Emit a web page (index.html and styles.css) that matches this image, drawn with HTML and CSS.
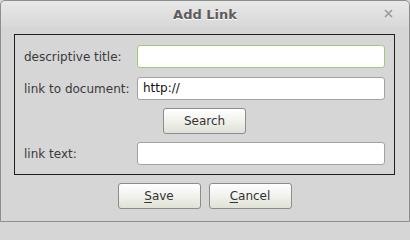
FILE: index.html
```html
<!DOCTYPE html>
<html>
<head>
<meta charset="utf-8">
<link rel="stylesheet" href="styles.css">
</head>
<body>
<div class="window">
  <div class="titlebar">
    <span class="title">Add Link</span>
    <span class="close">
      <svg width="9" height="9" viewBox="0 0 9 9"><path d="M1 1 L8 8 M8 1 L1 8" stroke="#9a9a9a" stroke-width="1.6" fill="none"/></svg>
    </span>
  </div>
  <div class="content">
    <div class="frame">
      <div class="row">
        <label class="label">descriptive title:</label>
        <div class="input focused"></div>
      </div>
      <div class="row">
        <label class="label">link to document:</label>
        <div class="input">http://</div>
      </div>
      <div class="row center">
        <button class="btn search">Search</button>
      </div>
      <div class="row">
        <label class="label">link text:</label>
        <div class="input"></div>
      </div>
    </div>
    <div class="actions">
      <button class="btn"><u>S</u>ave</button>
      <button class="btn"><u>C</u>ancel</button>
    </div>
  </div>
</div>
</body>
</html>
```
FILE: styles.css
```css
html, body {
  margin: 0;
  padding: 0;
  background: #d6d6d6;
}
.window {
  width: 410px;
  height: 222px;
  box-sizing: border-box;
  border: 1px solid #8e8e8e;
  border-radius: 5px 5px 0 0;
  background: #d6d6d6;
  font-family: "DejaVu Sans", sans-serif;
  color: #3a3a3a;
  overflow: hidden;
}
.titlebar {
  position: relative;
  height: 26px;
  display: flex;
  align-items: center;
  justify-content: center;
  background: linear-gradient(#e8e8e8, #d8d8d8);
  border-radius: 4px 4px 0 0;
}
.title {
  font-weight: bold;
  font-size: 13px;
  color: #5c5c5c;
  text-shadow: 0 1px 0 #ffffff;
}
.close {
  position: absolute;
  right: 16px;
  top: 8px;
  display: flex;
}
.content {
  padding: 7px 15px 0 13px;
  display: flex;
  flex-direction: column;
}
.frame {
  width: 381px;
  box-sizing: border-box;
  border: 1px solid #1e1e1e;
  padding: 10px 9px 9px 9px;
  display: flex;
  flex-direction: column;
  gap: 9px;
}
.row {
  display: flex;
  align-items: center;
}
.row.center {
  justify-content: center;
  margin: -1px 0;
}
.label {
  font-size: 12px;
  width: 113px;
  flex: none;
}
.input {
  width: 248px;
  height: 23px;
  box-sizing: border-box;
  background: #ffffff;
  border: 1px solid #a2a2a2;
  border-radius: 3px;
  font-size: 12px;
  color: #111;
  padding-left: 5px;
  line-height: 21px;
}
.input.focused {
  border-color: #9fc97c;
}
.btn {
  width: 83px;
  height: 26px;
  box-sizing: border-box;
  border: 1px solid #8c8c8c;
  border-radius: 3px;
  background: linear-gradient(#ffffff, #f4f5f1 40%, #dfe2d6);
  font-family: "DejaVu Sans", sans-serif;
  font-size: 12px;
  color: #333;
  padding: 0;
}
.btn u {
  text-decoration-thickness: 1px;
  text-underline-offset: 2px;
}
.actions {
  display: flex;
  justify-content: center;
  gap: 8px;
  margin-top: 8px;
  margin-left: 1px;
}
```
